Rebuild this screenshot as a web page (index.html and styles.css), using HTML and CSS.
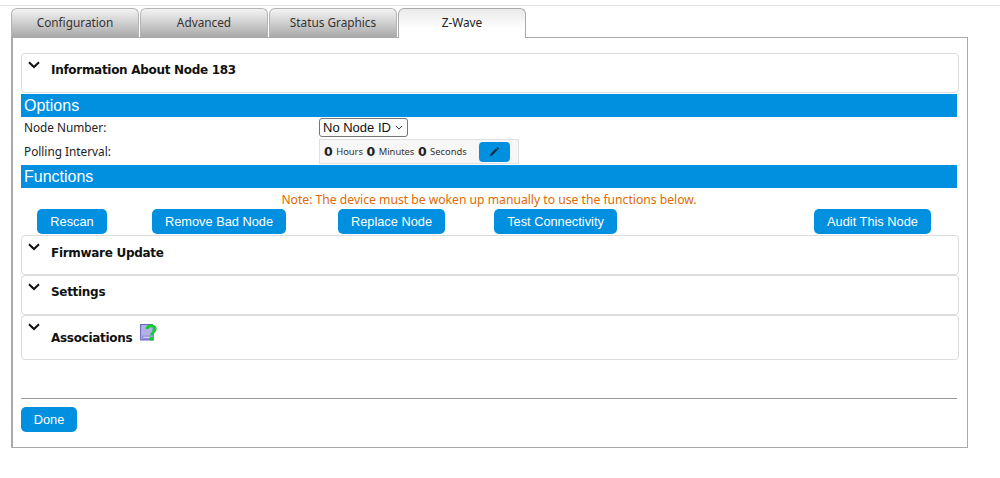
FILE: index.html
```html
<!DOCTYPE html>
<html lang="en">
<head>
<meta charset="utf-8">
<title>Z-Wave</title>
<link rel="stylesheet" href="styles.css">
</head>
<body>
<div class="page">
  <nav class="tabs">
    <div class="tab">Configuration</div>
    <div class="tab">Advanced</div>
    <div class="tab">Status Graphics</div>
    <div class="tab active">Z-Wave</div>
  </nav>
  <main class="panel">
    <section class="box box-info">
      <svg class="chev" viewBox="0 0 12 8"><path d="M1 1.2 6 6l5-4.8" /></svg>
      <h3 class="box-title">Information About Node 183</h3>
    </section>
    <h2 class="bar bar-options">Options</h2>
    <div class="row row-node">
      <label class="label">Node Number:</label>
      <div class="select-wrap">
        <select class="node-select"><option>No Node ID</option></select>
        <svg class="select-arrow" viewBox="0 0 10 6"><path d="M1 1l4 4 4-4"/></svg>
      </div>
    </div>
    <div class="row row-poll">
      <label class="label">Polling Interval:</label>
      <div class="poll">
        <b>0</b><span class="unit">Hours</span><b>0</b><span class="unit">Minutes</span><b>0</b><span class="unit">Seconds</span>
        <button class="edit" type="button" aria-label="Edit">
          <svg viewBox="0 0 12 12"><path d="M1.2 10.8 1.8 8.4 7.6 2.6 9.4 4.4 3.6 10.2ZM8.3 1.9 9.2 1 11 2.8 10.1 3.7Z"/></svg>
        </button>
      </div>
    </div>
    <h2 class="bar bar-functions">Functions</h2>
    <p class="note">Note: The device must be woken up manually to use the functions below.</p>
    <div class="actions">
      <button class="btn w-rescan" type="button">Rescan</button>
      <button class="btn w-remove" type="button">Remove Bad Node</button>
      <button class="btn w-replace" type="button">Replace Node</button>
      <button class="btn w-test" type="button">Test Connectivity</button>
      <button class="btn w-audit" type="button">Audit This Node</button>
    </div>
    <section class="box box-fw">
      <svg class="chev" viewBox="0 0 12 8"><path d="M1 1.2 6 6l5-4.8" /></svg>
      <h3 class="box-title">Firmware Update</h3>
    </section>
    <section class="box box-fw">
      <svg class="chev" viewBox="0 0 12 8"><path d="M1 1.2 6 6l5-4.8" /></svg>
      <h3 class="box-title box-title-settings">Settings</h3>
    </section>
    <section class="box box-assoc">
      <svg class="chev" viewBox="0 0 12 8"><path d="M1 1.2 6 6l5-4.8" /></svg>
      <h3 class="box-title assoc-title">Associations</h3>
      <svg class="help" viewBox="0 0 18 18">
        <path d="M1.5 1.5h11l1 1v13.5h-12z" fill="#b3b0e8" stroke="#6a68c4"/>
        <path d="M3.5 12.5h7l2 2H3.5z" fill="#e6e6f6" stroke="#6a68c4" stroke-width=".7"/>
        <path d="M7.4 5.8C7.8 1.8 15.4 1.6 15.4 5.8c0 2.8-3.6 2.8-3.6 6" fill="none" stroke="#10cf2c" stroke-width="2.6"/>
        <rect x="10.2" y="13.4" width="3.2" height="3.2" fill="#10cf2c"/>
      </svg>
    </section>
    <hr class="rule">
    <button class="btn done" type="button">Done</button>
  </main>
</div>
</body>
</html>
```

FILE: styles.css
```css
* { box-sizing: border-box; }
html, body { margin: 0; padding: 0; background: #fff; }
body { width: 1000px; height: 478px; overflow: hidden; font-family: "Liberation Sans", Arial, sans-serif; color: #111; }
.page { border-top: 1px solid #e4e4e4; margin-top: 5px; padding: 2px 0 0 11px; }

.tabs { display: flex; gap: 1px; height: 29px; align-items: flex-start; }
.tab {
  width: 128px; height: 29px; border: 1px solid #b4b4b4; border-bottom: 0; border-radius: 6px 6px 0 0;
  background: linear-gradient(#f4f4f4, #a9a9a9);
  font: 11.8px/27px "Noto Sans", sans-serif; text-align: center; color: #333;
}
.tab.active { background: linear-gradient(#e9e9e9 0, #fff 70%); color: #222; position: relative; z-index: 1; height: 30px; border-color: #aaa; }

.panel {
  width: 957px; height: 411px; border: 1px solid #aaa; border-left-width: 2px; padding: 15px 9px 0 8px;
  background: #fff;
}

.box { position: relative; border: 1px solid #dcdcdc; border-radius: 4px; width: 938px; display: flex; }
.box-info { height: 40px; margin-bottom: 1px; }
.box-fw { height: 40px; }
.box-assoc { height: 45px; }
.chev { position: absolute; left: 6px; top: 7px; width: 12px; height: 8px; fill: none; stroke: #111; stroke-width: 2; }
.box-title { margin: 8px 0 0 29px; font: bold 12px/16px "DejaVu Sans", sans-serif; color: #111; letter-spacing: -0.3px; }
.box-fw .box-title { margin-top: 9px; }
.box-fw .box-title-settings { margin-top: 8px; }
.box-assoc .assoc-title { margin-top: 14px; }
.help { position: absolute; left: 117px; top: 7px; width: 19px; height: 19px; }

.bar { width: 936px; margin: 0; padding-left: 3px; background: #0090df; color: #fff; font: 400 16px/23px "Liberation Sans", sans-serif; height: 23px; }
.row { display: flex; width: 936px; padding-left: 3px; }
.row-node { height: 21px; align-items: center; }
.row-poll { height: 27px; align-items: center; }
.label { width: 295px; margin-top: -2px; font: 11.8px/16px "Noto Sans", sans-serif; color: #222; }
.select-wrap { position: relative; width: 89px; height: 19px; }
.node-select {
  appearance: none; -webkit-appearance: none; display: block;
  width: 89px; height: 19px; padding: 0 0 0 3px; border: 1px solid #767676; border-radius: 3px; background: #fff;
  font: 13px "Liberation Sans", sans-serif; color: #111;
}
.select-arrow { position: absolute; right: 5px; top: 7px; width: 8px; height: 5px; fill: none; stroke: #222; stroke-width: 1.2; pointer-events: none; }
.poll {
  width: 200px; height: 25px; border: 1px solid #e0e0e0; background: #f7f7f7;
  display: flex; align-items: center; padding-left: 4px; font: 9.4px "Noto Sans", sans-serif; color: #333;
}
.poll b { font: bold 12.5px "DejaVu Sans", sans-serif; color: #222; margin-right: 3.5px; }
.unit { margin-right: 3.5px; }
.edit { flex: none; width: 31px; height: 20px; margin-left: 8.5px; border: 0; border-radius: 4px; background: #0090df; padding: 0; display: flex; align-items: center; justify-content: center; }
.edit svg { width: 11px; height: 11px; fill: #102a3c; }

.note { margin: 0; height: 21px; width: 936px; text-align: center; font: 12.15px/23px "Noto Sans", sans-serif; color: #e06a00; }
.actions { display: flex; height: 25px; margin-bottom: 1px; }
.btn { height: 25px; border: 0; border-radius: 5px; background: #0090df; color: #fff; font: 12.8px "Liberation Sans", sans-serif; padding: 0; }
.w-rescan { width: 70px; margin-left: 16px; }
.w-remove { width: 134px; margin-left: 45px; }
.w-replace { width: 107px; margin-left: 52px; }
.w-test { width: 123px; margin-left: 49px; }
.w-audit { width: 117px; margin-left: 197px; }

.rule { width: 936px; margin: 38px 0 8px; border: 0; border-top: 1px solid #9a9a9a; height: 1px; }
.done { width: 56px; display: block; }
```
